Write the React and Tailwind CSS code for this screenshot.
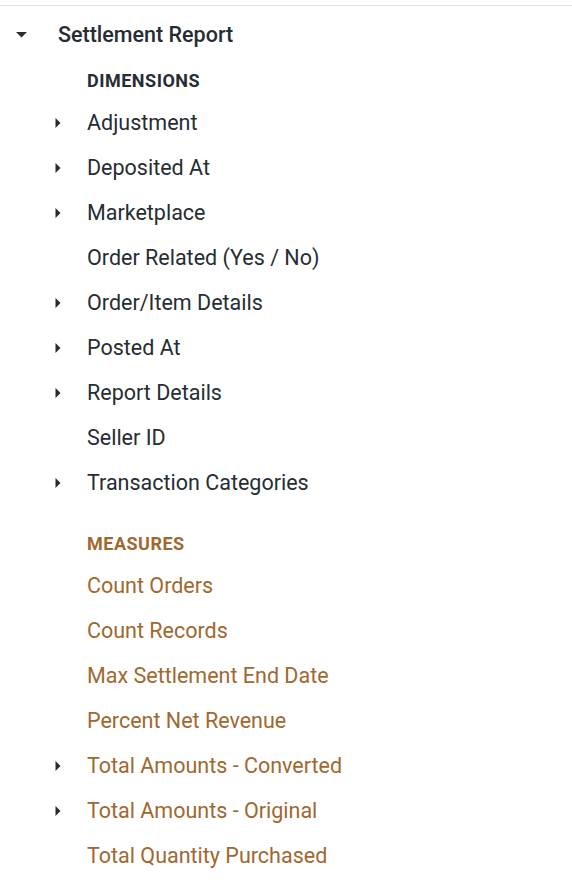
import React from "react";

const dims = [
  { label: "Adjustment", caret: true },
  { label: "Deposited At", caret: true },
  { label: "Marketplace", caret: true },
  { label: "Order Related (Yes / No)", caret: false },
  { label: "Order/Item Details", caret: true },
  { label: "Posted At", caret: true },
  { label: "Report Details", caret: true },
  { label: "Seller ID", caret: false },
  { label: "Transaction Categories", caret: true },
];

const measures = [
  { label: "Count Orders", caret: false },
  { label: "Count Records", caret: false },
  { label: "Max Settlement End Date", caret: false },
  { label: "Percent Net Revenue", caret: false },
  { label: "Total Amounts - Converted", caret: true },
  { label: "Total Amounts - Original", caret: true },
  { label: "Total Quantity Purchased", caret: false },
];

function RightCaret() {
  return (
    <svg width="6" height="10" viewBox="0 0 6 10" className="block">
      <path d="M0.5 0 L5.5 5 L0.5 10 Z" fill="#262d33" />
    </svg>
  );
}

function Row({ label, caret, color }) {
  return (
    <div className="flex h-[45px] items-center">
      <div className="flex w-[87px] justify-start pl-[55px]">
        {caret ? <RightCaret /> : null}
      </div>
      <span className={`text-[21.5px] leading-none ${color}`}>{label}</span>
    </div>
  );
}

export default function App() {
  return (
    <div
      className="h-[896px] w-[572px] overflow-hidden bg-white"
      style={{ fontFamily: "Roboto, 'Liberation Sans', sans-serif" }}
    >
      <div className="mt-[5px] border-t border-[#e0e0e0]" />
      <div className="mt-[1px] flex h-[56px] items-center">
        <div className="flex w-[58px] pl-[16px]">
          <svg width="11" height="6" viewBox="0 0 11 6" className="block">
            <path d="M0 0 L11 0 L5.5 5.5 Z" fill="#262d33" />
          </svg>
        </div>
        <span className="text-[21.5px] font-medium leading-none text-[#262d33]">
          Settlement Report
        </span>
      </div>
      <div className="flex h-[37px] items-center pb-[2px] pl-[87px]">
        <span className="text-[18px] font-bold uppercase leading-none tracking-[0.5px] text-[#262d33]">
          Dimensions
        </span>
      </div>
      {dims.map((d) => (
        <Row key={d.label} {...d} color="text-[#262d33]" />
      ))}
      <div className="mt-[19px] flex h-[39px] items-center pl-[87px]">
        <span className="text-[18px] font-bold uppercase leading-none tracking-[0.5px] text-[#a0682f]">
          Measures
        </span>
      </div>
      {measures.map((d) => (
        <Row key={d.label} {...d} color="text-[#a0682f]" />
      ))}
    </div>
  );
}
